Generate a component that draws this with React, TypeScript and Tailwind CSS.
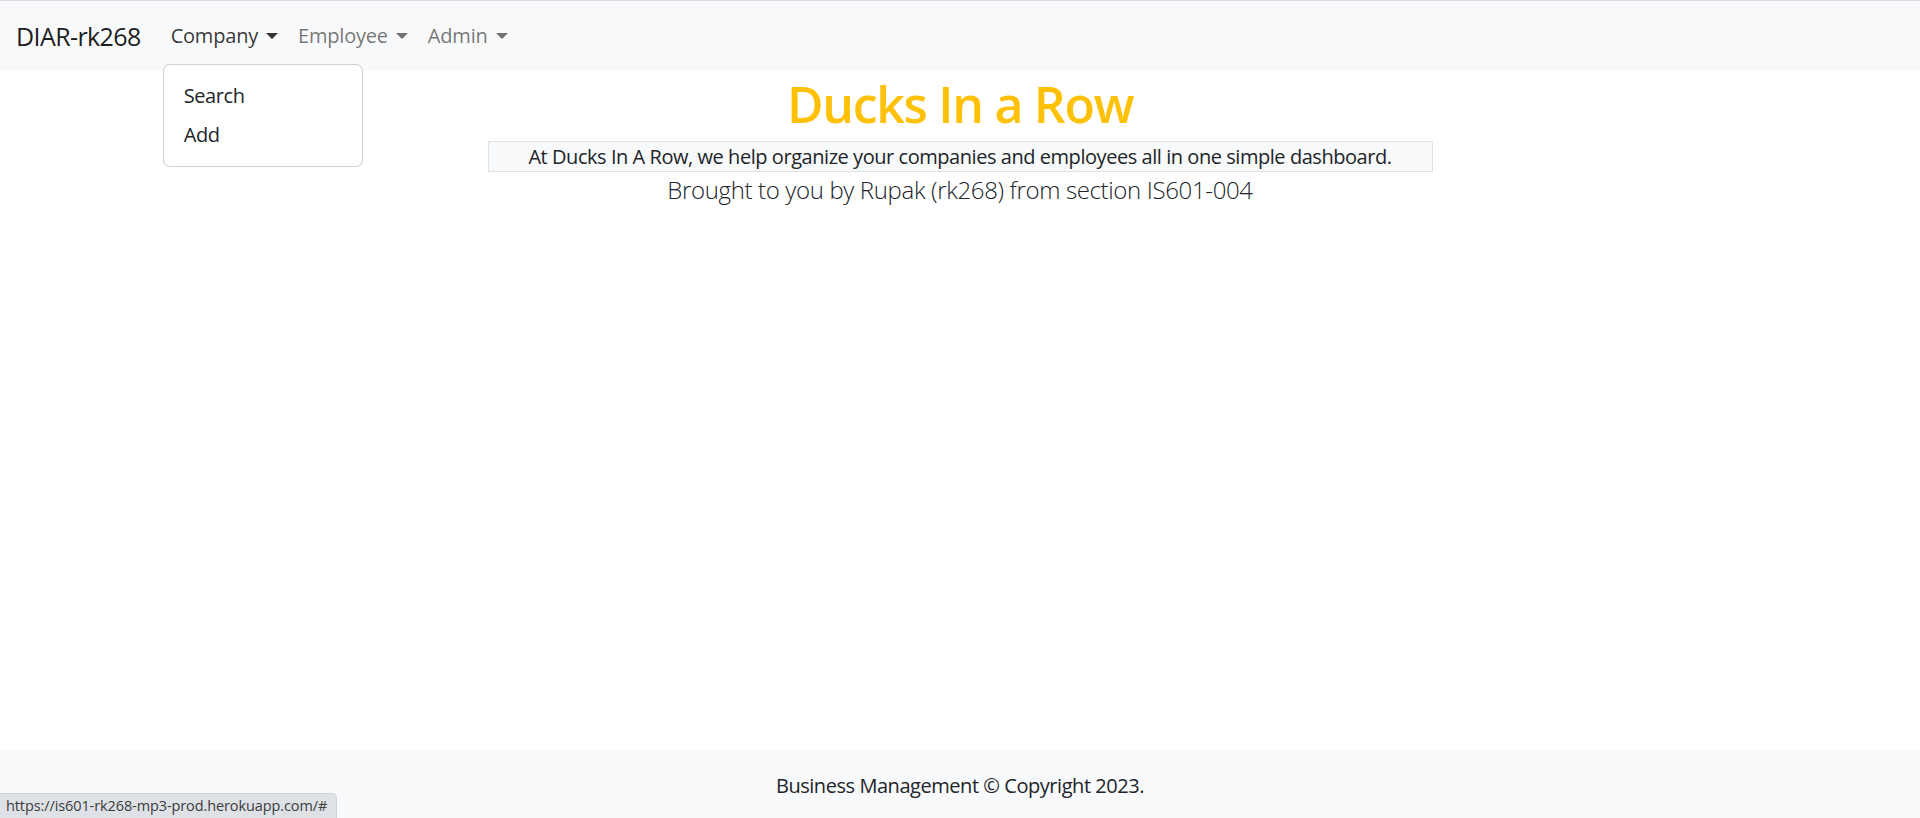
import { ReactNode } from 'react'

const font = { fontFamily: '"Open Sans", "Noto Sans", Arial, sans-serif' }

function NavItem({ label, active, children }: { label: string; active?: boolean; children?: ReactNode }) {
  return (
    <li className="relative">
      <a
        href="#"
        className={`flex items-center px-[10px] py-[10px] text-[20px] leading-[30px] tracking-[-0.2px] ${
          active ? 'text-[rgba(0,0,0,0.8)]' : 'text-[rgba(0,0,0,0.55)]'
        }`}
      >
        {label}
        <span className="ml-[8px] inline-block h-0 w-0 border-x-[6px] border-t-[6px] border-x-transparent border-t-current" />
      </a>
      {children}
    </li>
  )
}

export default function App() {
  return (
    <div className="relative flex h-[818px] flex-col overflow-hidden bg-white text-[#212529]" style={font}>
      <nav className="h-[71px] shrink-0 border-t border-[#dadce0] bg-[#f8f9fa]">
        <div className="flex h-[70px] items-center px-4">
          <a href="#" className="mr-[20px] text-[25px] leading-[36px] tracking-[-0.6px] text-[rgba(0,0,0,0.9)]">
            DIAR-rk268
          </a>
          <ul className="flex items-center">
            <NavItem label="Company" active>
              <div className="absolute left-[2px] top-full z-10 mt-[3px] w-[200px] rounded-[7px] border border-[rgba(0,0,0,0.18)] bg-white py-3">
                <a href="#" className="block px-5 text-[20px] leading-[38px] tracking-[-0.4px] text-[#212529]">
                  Search
                </a>
                <a href="#" className="block px-5 text-[20px] leading-[39px] tracking-[-0.4px] text-[#212529]">
                  Add
                </a>
              </div>
            </NavItem>
            <NavItem label="Employee" />
            <NavItem label="Admin" />
          </ul>
        </div>
      </nav>

      <main className="flex flex-1 flex-col items-center">
        <h1 className="mt-0 text-[50px] font-semibold leading-[66px] tracking-[-1.3px] text-[#ffc107]">
          Ducks In a Row
        </h1>
        <p className="mt-[4px] w-[945px] border border-[#dee2e6] bg-[#f8f9fa] text-center text-[20px] leading-[29px] tracking-[-0.45px]">
          At Ducks In A Row, we help organize your companies and employees all in one simple dashboard.
        </p>
        <p className="text-[24px] font-light leading-[36px] tracking-[-0.35px] text-[#212529]">
          Brought to you by Rupak (rk268) from section IS601-004
        </p>
      </main>

      <footer className="h-[67px] shrink-0 bg-[#f8f9fa] pt-[20px] text-center text-[20px] leading-[30px] tracking-[-0.45px]">
        Business Management © Copyright 2023.
      </footer>

      <div className="absolute bottom-0 left-0 h-[25px] w-[337px] whitespace-nowrap rounded-tr-[5px] border-t border-r border-[#d0d3d8] bg-[#dee1e6] pl-[6px] text-[14.5px] leading-[24px] tracking-[-0.1px] text-[#3c3c3c]">
        https://is601-rk268-mp3-prod.herokuapp.com/#
      </div>
    </div>
  )
}
